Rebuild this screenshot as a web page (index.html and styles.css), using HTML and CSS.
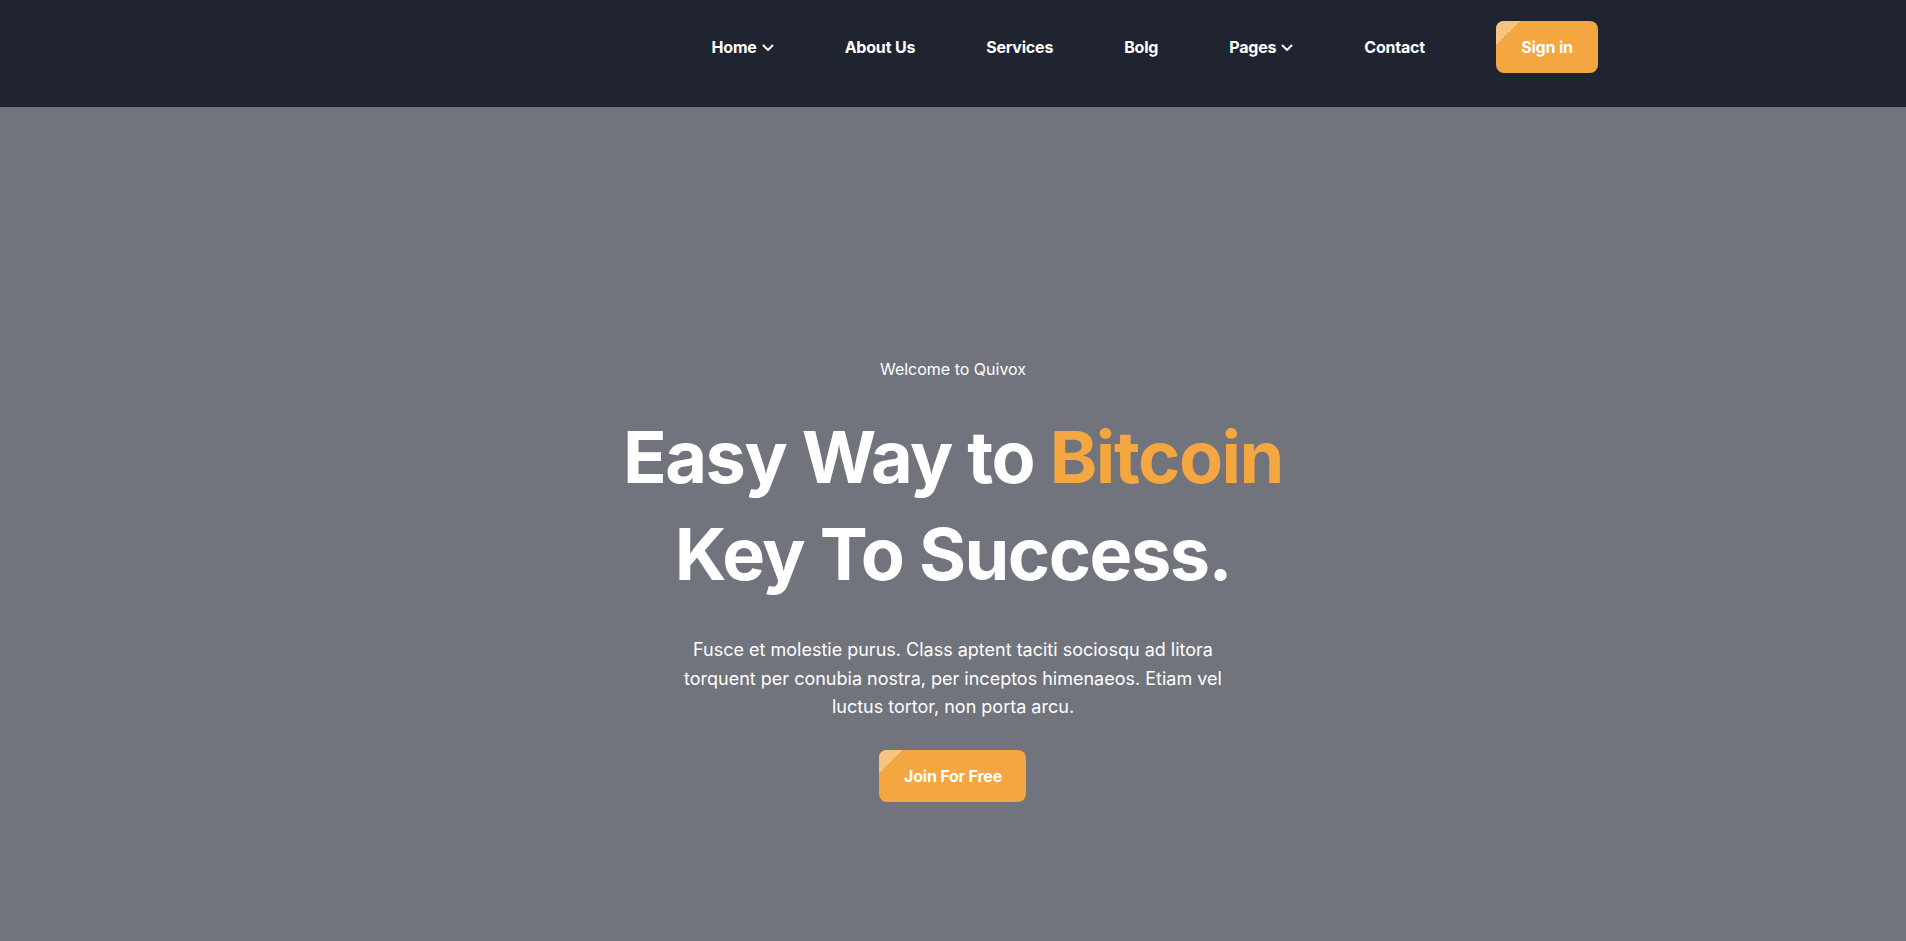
FILE: index.html
```html
<!DOCTYPE html>
<html lang="en">
<head>
<meta charset="utf-8">
<title>Quivox</title>
<link rel="stylesheet" href="styles.css">
</head>
<body>
<header class="site-header">
  <div class="container header-inner">
    <nav class="main-nav">
      <ul class="nav-list">
        <li class="nav-item">Home <svg class="chev" viewBox="0 0 12 8" width="12" height="8"><path d="M1.5 1.5 6 6l4.5-4.5" fill="none" stroke="currentColor" stroke-width="2" stroke-linecap="round" stroke-linejoin="round"/></svg></li>
        <li class="nav-item">About Us</li>
        <li class="nav-item">Services</li>
        <li class="nav-item">Bolg</li>
        <li class="nav-item">Pages <svg class="chev" viewBox="0 0 12 8" width="12" height="8"><path d="M1.5 1.5 6 6l4.5-4.5" fill="none" stroke="currentColor" stroke-width="2" stroke-linecap="round" stroke-linejoin="round"/></svg></li>
        <li class="nav-item">Contact</li>
      </ul>
    </nav>
    <a class="btn btn-signin" href="#">Sign in</a>
  </div>
</header>
<section class="hero">
  <div class="hero-content">
    <p class="hero-kicker">Welcome to Quivox</p>
    <h1 class="hero-title">Easy Way to <span class="accent">Bitcoin</span><br>Key To Success.</h1>
    <p class="hero-text">Fusce et molestie purus. Class aptent taciti sociosqu ad litora torquent per conubia nostra, per inceptos himenaeos. Etiam vel luctus tortor, non porta arcu.</p>
    <a class="btn btn-join" href="#">Join For Free</a>
  </div>
</section>
</body>
</html>
```
FILE: styles.css
```css
* { box-sizing: border-box; }
html, body { margin: 0; padding: 0; }
body {
  font-family: Inter, "Noto Sans", "Liberation Sans", sans-serif;
  background: #71747d;
  color: #fff;
  height: 941px;
  overflow: hidden;
}
.container {
  max-width: 1320px;
  margin: 0 auto;
  padding: 0 15px;
}
.site-header {
  background: #1f2430;
  height: 107px;
}
.header-inner {
  height: 100%;
  padding-bottom: 13px;
  display: flex;
  align-items: center;
  justify-content: flex-end;
}
.nav-list {
  list-style: none;
  margin: 0;
  padding: 0;
  display: flex;
  gap: 71px;
}
.nav-item {
  font-size: 16px;
  font-weight: 700;
  color: #fff;
  display: flex;
  align-items: center;
  gap: 5px;
  letter-spacing: -0.2px;
}
.chev { display: block; margin-top: 1px; }
.btn {
  position: relative;
  overflow: hidden;
  display: inline-flex;
  align-items: center;
  justify-content: center;
  background: #f4a641;
  color: #fff;
  font-weight: 700;
  font-size: 16px;
  text-decoration: none;
  border-radius: 8px;
  letter-spacing: -0.2px;
}
.btn::before {
  content: "";
  position: absolute;
  left: 0;
  top: 0;
  width: 24px;
  height: 24px;
  background: linear-gradient(135deg, #f7c47f 50%, transparent 50%);
}
.btn-signin {
  margin-left: 71px;
  width: 102px;
  height: 52px;
}
.hero {
  height: 834px;
  display: flex;
  justify-content: center;
  padding-top: 250px;
}
.hero-content {
  text-align: center;
  display: flex;
  flex-direction: column;
  align-items: center;
}
.hero-kicker {
  margin: 0;
  font-size: 16px;
  line-height: 24px;
}
.hero-title {
  margin: 27px 0 0;
  font-size: 72px;
  line-height: 97px;
  font-weight: 700;
  letter-spacing: -1.5px;
}
.accent { color: #f4a641; }
.hero-text {
  margin: 34px 0 0;
  max-width: 545px;
  font-size: 18px;
  line-height: 28.5px;
}
.btn-join {
  margin-top: 28px;
  width: 147px;
  height: 52px;
  font-size: 16px;
}
```
